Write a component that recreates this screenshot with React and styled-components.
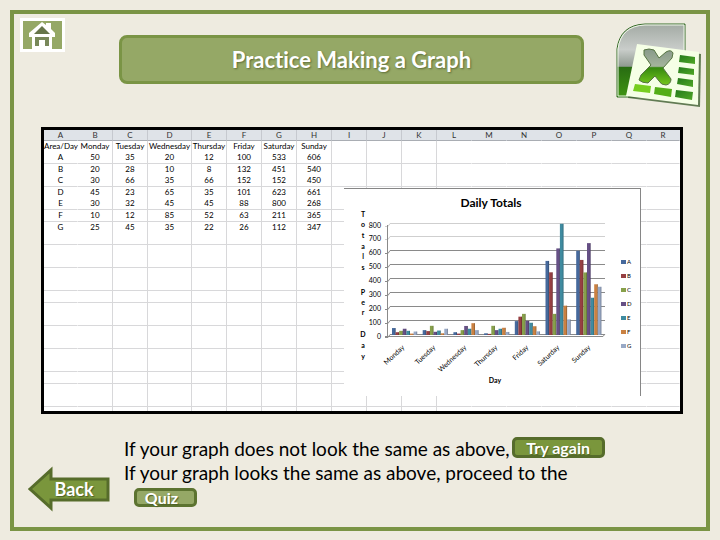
import React from "react";
import styled, { createGlobalStyle } from "styled-components";

const Global = createGlobalStyle`
  * { box-sizing: border-box; }
  body {
    margin: 0;
    background: #eeebe0;
    font-family: Lato, "Open Sans", sans-serif;
    font-variant-ligatures: none;
    color: #000;
  }
  button { font-family: inherit; margin: 0; cursor: pointer; }
`;

const Page = styled.div`
  min-height: 100vh;
  padding: 10px 10px 9px;
  display: flex;
`;

const Frame = styled.main`
  flex: 1;
  min-width: 0;
  border: 4px solid #7a9445;
  display: flex;
  flex-direction: column;
`;

const Header = styled.header`
  display: flex;
  align-items: flex-start;
  padding: 4px 4px 0 6px;
`;

const HomeButton = styled.button`
  width: 45px;
  height: 34px;
  padding: 0;
  border: 3px solid #fff;
  background: #95a866;
  display: flex;
  align-items: center;
  justify-content: center;
`;

const Title = styled.h1`
  flex: 1;
  height: 49px;
  margin: 17px 32px 0 54px;
  border: 3px solid #7a9445;
  border-radius: 8px;
  background: #95a866;
  color: #fff;
  font-size: 22px;
  line-height: 44px;
  font-weight: 700;
  text-align: center;
  text-shadow: 1px 1px 2px #5d6d38;
`;

const Logo = styled.svg`
  width: 86px;
  height: 86px;
  margin-top: 4px;
  flex: none;
`;

const Sheet = styled.section`
  position: relative;
  height: 287px;
  margin: 19px 23px 0 27px;
  border: 3px solid #000;
  background: #fff;
  overflow: hidden;
`;

const Grid = styled.table`
  width: 100%;
  table-layout: fixed;
  border-collapse: separate;
  border-spacing: 0;
  font-size: 8px;
  line-height: 9px;
`;

const Col = styled.col`
  width: ${(p) => p.$width}px;
`;

const Row = styled.tr`
  height: ${(p) => p.$height}px;
`;

const HeadCell = styled.th`
  padding: 0;
  height: 11px;
  background: #dfe3e8;
  border-bottom: 1px solid #a9adb3;
  border-right: 1px solid ${(p) => (p.$line ? "#c6c9cf" : "transparent")};
  color: #333;
  font-weight: 400;
`;

const Cell = styled.td`
  padding: 0;
  text-align: center;
  white-space: nowrap;
  border-right: 1px solid ${(p) => (p.$line ? "#d8d8da" : "transparent")};
  border-bottom: ${(p) => (p.$under ? "1px solid #d8d8da" : "0")};
`;

const ChartBox = styled.figure`
  position: absolute;
  left: 300px;
  top: 58px;
  width: 297px;
  height: 208px;
  margin: 0;
  background: #fff;
  border-top: 1px solid #868686;
  border-right: 1px solid #868686;
`;

const ChartSvg = styled.svg`
  display: block;
  width: 296px;
  height: 207px;
`;

const Footer = styled.footer`
  display: flex;
  align-items: flex-start;
  padding: 23px 14px 0;
`;

const BackButton = styled.button`
  position: relative;
  width: 82px;
  height: 46px;
  margin: 29px 14px 0 0;
  padding: 0 0 0 10px;
  border: 0;
  background: none;
  color: #fff;
  font-size: 18px;
  line-height: 46px;
  font-weight: 700;
  text-shadow: 1px 1px 1px #4d6125;
`;

const Arrow = styled.svg`
  position: absolute;
  inset: 0;
`;

const BackLabel = styled.span`
  position: relative;
`;

const Instructions = styled.div`
  font-size: 19px;
  line-height: 24px;
`;

const Line = styled.p`
  margin: 0;
  display: flex;
  gap: 2px;
  align-items: flex-start;
`;

const ActionButton = styled.button`
  width: ${(p) => (p.$small ? 63 : 93)}px;
  height: ${(p) => (p.$small ? 19 : 21)}px;
  margin-left: ${(p) => (p.$small ? 10 : 0)}px;
  padding: ${(p) => (p.$small ? "0 8px 0 0" : "0")};
  border: 3px solid ${(p) => (p.$small ? "#5c7330" : "#566c2b")};
  border-radius: 5px;
  background: ${(p) => (p.$small ? "#95a866" : "#7a963c")};
  color: #fff;
  font-size: 16px;
  line-height: 14px;
  font-weight: 700;
  text-shadow: 1px 1px 1px #4d6125;
`;

const columns = "ABCDEFGHIJKLMNOPQR".split("");
const columnWidth = (i) => (i === 0 ? 34 : i === 3 ? 44 : 35);
const hasLine = (i) => i > 0 && i < 11;

const days = ["Monday", "Tuesday", "Wednesday", "Thursday", "Friday", "Saturday", "Sunday"];
const areas = [
  { name: "A", color: "#46699c", values: [50, 35, 20, 12, 100, 533, 606] },
  { name: "B", color: "#963f42", values: [20, 28, 10, 8, 132, 451, 540] },
  { name: "C", color: "#87a04b", values: [30, 66, 35, 66, 152, 152, 450] },
  { name: "D", color: "#665085", values: [45, 23, 65, 35, 101, 623, 661] },
  { name: "E", color: "#3f8ba0", values: [30, 32, 45, 45, 88, 800, 268] },
  { name: "F", color: "#ca8142", values: [10, 12, 85, 52, 63, 211, 365] },
  { name: "G", color: "#98a9c6", values: [25, 45, 35, 22, 26, 112, 347] },
];
const rows = [["Area/Day", ...days], ...areas.map((a) => [a.name, ...a.values])];
const rowHeights = [11, 12, 11, 12, 11, 12, 12];
const underlined = [false, true, false, true, false, true, true];

function HomeIcon() {
  return (
    <svg width="27" height="27" viewBox="0 0 27 27" aria-hidden="true">
      <path d="M13 0 L17 3 V1 H22 V7 L26 11 V15 H23 V27 H3 V15 H0 V11 Z" fill="#fff" />
      <path d="M5 12 L13 4 L21 12 Z" fill="#66754a" />
      <path d="M6 15 H20 V24 H16 V18 H10 V24 H6 Z" fill="#78885a" />
    </svg>
  );
}

function ExcelLogo() {
  return (
    <Logo viewBox="0 0 86 86" role="img" aria-label="Excel">
      <defs>
        <linearGradient id="glass" x1="0" y1="0" x2="0" y2="1">
          <stop offset="0" stopColor="#a3aaa4" />
          <stop offset=".35" stopColor="#c9cdca" />
          <stop offset=".58" stopColor="#8f9a90" />
          <stop offset=".59" stopColor="#286c12" />
          <stop offset="1" stopColor="#3f9412" />
        </linearGradient>
        <linearGradient id="letter" x1="0" y1="0" x2="0" y2="1">
          <stop offset="0" stopColor="#87998a" />
          <stop offset=".48" stopColor="#a4b49c" />
          <stop offset=".52" stopColor="#36890f" />
          <stop offset="1" stopColor="#74c61c" />
        </linearGradient>
        <linearGradient id="cell" x1="0" y1="0" x2="1" y2="1">
          <stop offset="0" stopColor="#247a1c" />
          <stop offset="1" stopColor="#50a827" />
        </linearGradient>
      </defs>
      <path d="M1 75 V27 Q4 3 29 2 H69 V75 Z" fill="url(#glass)" stroke="#356c27" />
      <path d="M2 74 V27 Q5 4 29 3 H68 V74 Z" fill="none" stroke="#eef7e6" />
      <path d="M23 24 L85 32 L84 85 L12 76 Z" fill="#335526" opacity=".75" />
      <path d="M21 22 L83 30 L82 83 L10 74 Z" fill="#f5ffe6" />
      <path d="M28 28 Q33 26 38 28 L43 36 L50 30 Q55 27 57 31 L56 36 L47 46 L55 57 Q55 62 50 63 Q45 63 43 59 L39 54 L32 61 Q26 61 23 58 L25 53 L35 43 L28 33 Z" fill="url(#letter)" stroke="#557442" />
      <g fill="url(#cell)">
        <path d="M64 33 L79 35 V42 L63 40 Z" />
        <path d="M63 45 L78 47 V53 L62 51 Z" />
        <path d="M62 56 L77 58 V65 L61 62 Z" />
        <path d="M60 68 L77 70 L76 78 L59 75 Z" />
        <path d="M39 65 L56 67 L55 75 L38 72 Z" fill="#54ae18" />
        <path d="M19 62 L35 64 L34 71 L17 69 Z" fill="#77ce20" />
      </g>
    </Logo>
  );
}

const gridTops = [34, 47, 61, 75, 89, 103, 117, 131, 145];
const axisTitle = [
  ["T", 28], ["o", 38], ["t", 49], ["a", 60], ["l", 70], ["s", 81],
  ["P", 106], ["e", 116], ["r", 126], ["D", 148], ["a", 159], ["y", 170],
];

function DailyChart() {
  return (
    <ChartSvg viewBox="0 0 296 207" role="img" aria-label="Daily Totals" fontFamily="Lato, sans-serif">
      <text x="147" y="18" fontSize="12" fontWeight="700" textAnchor="middle">Daily Totals</text>
      {gridTops.map((y, i) => (
        <g key={y}>
          <path
            d={`M41 ${y + 3}.5 H44 L46 ${y}.5 H261`}
            fill="none"
            stroke={i < 2 ? "#cfcfcf" : "#8a8a8a"}
          />
          <text x="37" y={y + 5} fontSize="7" textAnchor="end">{800 - i * 100}</text>
        </g>
      ))}
      <path d="M43.5 36 V148 M41 147.5 H259 L261 145" fill="none" stroke="#8a8a8a" />
      {days.map((day, d) => (
        <g key={day}>
          {areas.map((a, i) => {
            const h = Math.max(1, a.values[d] * 0.139);
            const x = 48 + d * 30.7 + i * 3.6;
            return (
              <g key={a.name}>
                <rect x={x} y={146 - h} width="3.6" height={h} fill={a.color} />
                <rect x={x + 2.8} y={146 - h} width=".8" height={h} fill="#000" opacity=".25" />
              </g>
            );
          })}
          <text
            fontSize="7"
            textAnchor="end"
            transform={`translate(${61 + d * 31} 159) rotate(-43)`}
          >
            {day}
          </text>
        </g>
      ))}
      {axisTitle.map(([c, y]) => (
        <text key={y} x="19" y={y} fontSize="7" fontWeight="700" textAnchor="middle">{c}</text>
      ))}
      <text x="151" y="194" fontSize="7" fontWeight="700" textAnchor="middle">Day</text>
      {areas.map((a, i) => (
        <g key={a.name}>
          <rect x="277" y={71 + i * 14} width="5" height="4" fill={a.color} />
          <text x="283" y={75 + i * 14} fontSize="6">{a.name}</text>
        </g>
      ))}
    </ChartSvg>
  );
}

function Spreadsheet() {
  return (
    <Grid>
      <colgroup>
        {columns.map((c, i) => (i === 17 ? <col key={c} /> : <Col key={c} $width={columnWidth(i)} />))}
      </colgroup>
      <thead>
        <tr>
          {columns.map((c, i) => <HeadCell key={c} scope="col" $line={hasLine(i)}>{c}</HeadCell>)}
        </tr>
      </thead>
      <tbody>
        {Array.from({ length: 24 }, (_, r) => (
          <Row key={r} $height={rowHeights[r % 7]}>
            {columns.map((c, i) => (
              <Cell key={c} $line={hasLine(i)} $under={underlined[r % 7]}>
                {rows[r] ? rows[r][i] : null}
              </Cell>
            ))}
          </Row>
        ))}
      </tbody>
    </Grid>
  );
}

export default function App() {
  return (
    <Page>
      <Global />
      <Frame>
        <Header>
          <HomeButton type="button" aria-label="Home"><HomeIcon /></HomeButton>
          <Title>Practice Making a Graph</Title>
          <ExcelLogo />
        </Header>
        <Sheet>
          <Spreadsheet />
          <ChartBox><DailyChart /></ChartBox>
        </Sheet>
        <Footer>
          <BackButton type="button">
            <Arrow width="82" height="46" viewBox="0 0 82 46" aria-hidden="true">
              <path d="M2 23 L23 4 V13 H80 V34 H23 V42 Z" fill="#7a963c" stroke="#566c2b" strokeWidth="3" />
            </Arrow>
            <BackLabel>Back</BackLabel>
          </BackButton>
          <Instructions>
            <Line>
              If your graph does not look the same as above,
              <ActionButton type="button">Try again</ActionButton>
            </Line>
            <Line>If your graph looks the same as above, proceed to the</Line>
            <ActionButton type="button" $small>Quiz</ActionButton>
          </Instructions>
        </Footer>
      </Frame>
    </Page>
  );
}
